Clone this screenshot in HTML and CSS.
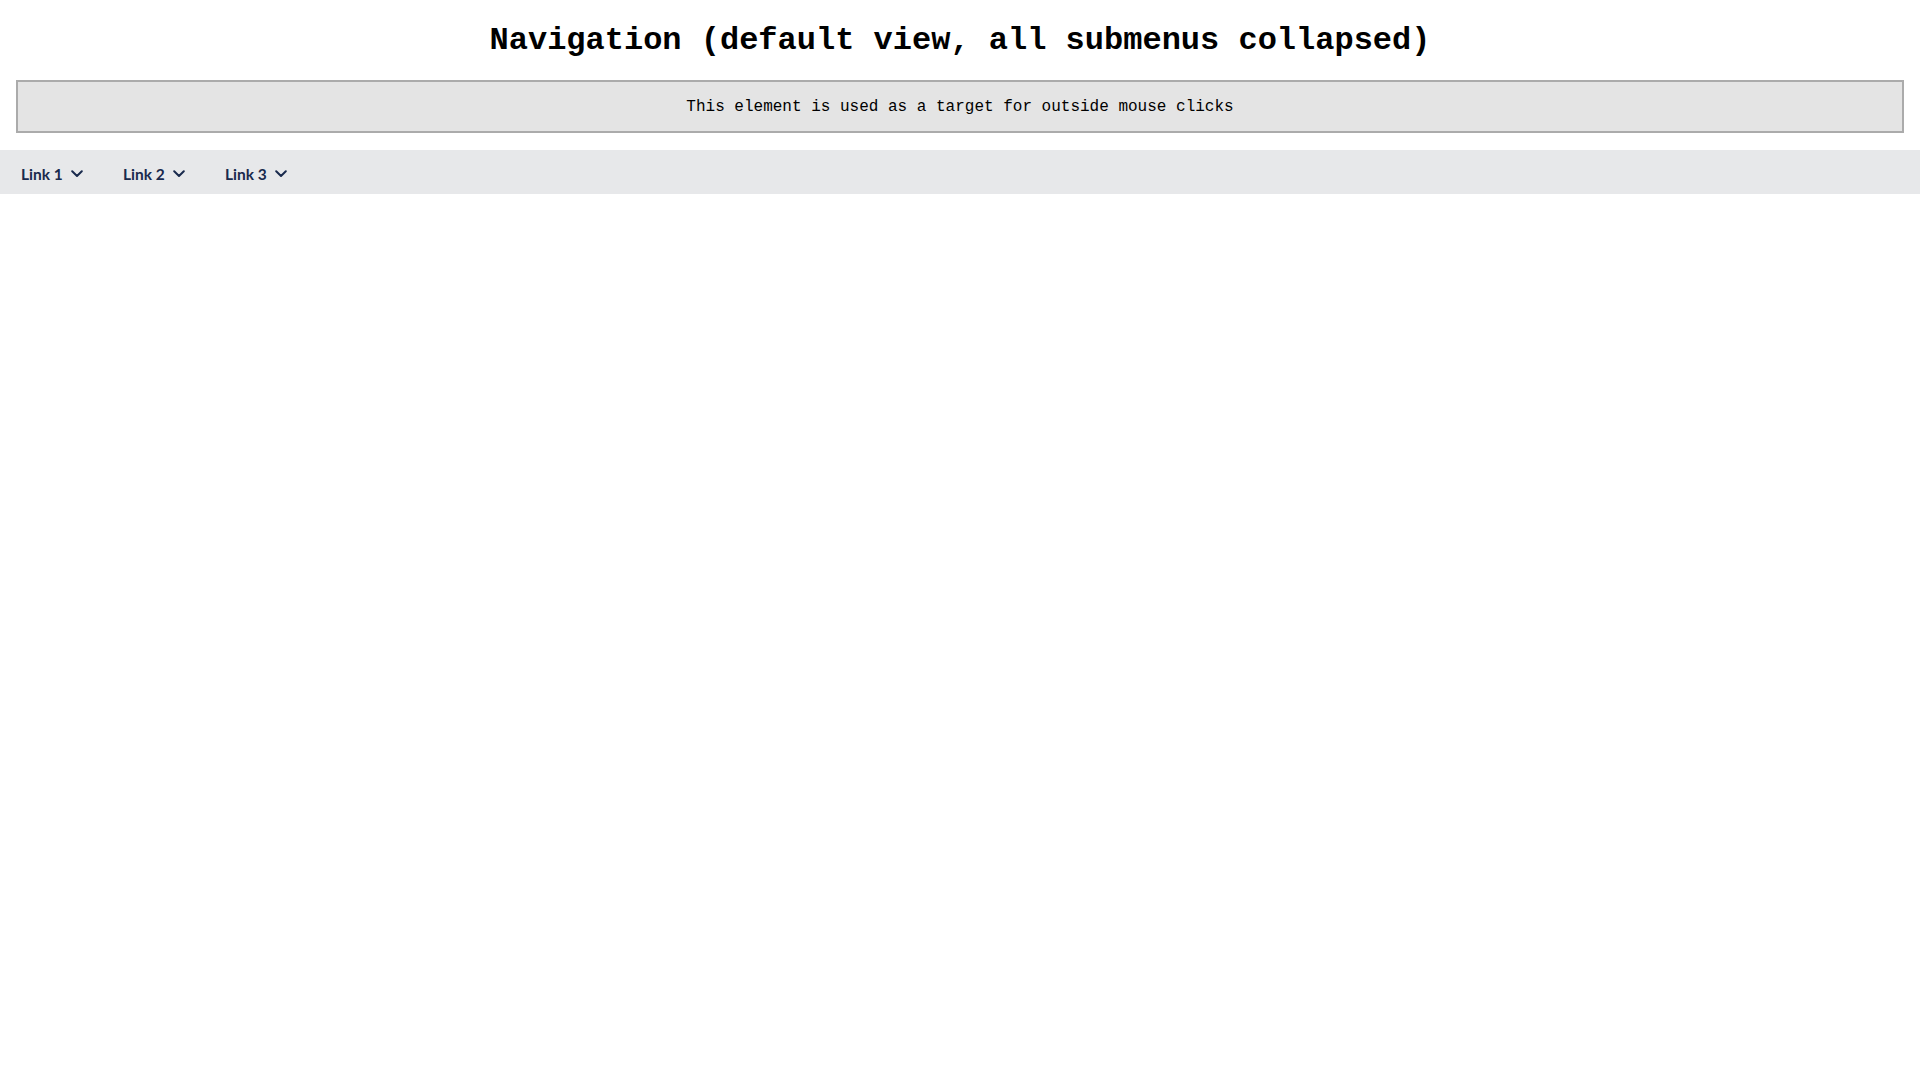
FILE: index.html
```html
<!DOCTYPE html>
<html>
<head>
<meta charset="utf-8">
<title>Navigation</title>
<link rel="stylesheet" href="styles.css">
</head>
<body>
<h1 class="title">Navigation (default view, all submenus collapsed)</h1>
<div class="click-target">This element is used as a target for outside mouse clicks</div>
<nav class="nav">
  <ul class="nav-list">
    <li class="nav-item"><a class="nav-link" href="#">Link 1<svg class="chev" viewBox="0 0 12 8" width="12" height="8"><path d="M1.2 1.3 L6 6 L10.8 1.3" fill="none" stroke="currentColor" stroke-width="2" stroke-linecap="round" stroke-linejoin="round"/></svg></a></li>
    <li class="nav-item"><a class="nav-link" href="#">Link 2<svg class="chev" viewBox="0 0 12 8" width="12" height="8"><path d="M1.2 1.3 L6 6 L10.8 1.3" fill="none" stroke="currentColor" stroke-width="2" stroke-linecap="round" stroke-linejoin="round"/></svg></a></li>
    <li class="nav-item"><a class="nav-link" href="#">Link 3<svg class="chev" viewBox="0 0 12 8" width="12" height="8"><path d="M1.2 1.3 L6 6 L10.8 1.3" fill="none" stroke="currentColor" stroke-width="2" stroke-linecap="round" stroke-linejoin="round"/></svg></a></li>
  </ul>
</nav>
</body>
</html>
```

FILE: styles.css
```css
html, body {
  margin: 0;
  padding: 0;
  background: #ffffff;
}

body {
  font-family: "Liberation Mono", "Courier New", monospace;
  color: #000;
}

.title {
  font-family: "Liberation Mono", "Courier New", monospace;
  font-weight: bold;
  font-size: 32px;
  line-height: 36px;
  text-align: center;
  margin: 23px 0 21px;
}

.click-target {
  margin: 0 16px;
  border: 2px solid #ababab;
  background: #e4e4e4;
  font-size: 16px;
  line-height: 18px;
  padding: 16px 0 15px;
  text-align: center;
}

.nav {
  margin-top: 17px;
  background: #e7e8ea;
  height: 44px;
}

.nav-list {
  list-style: none;
  margin: 0;
  padding: 0 0 0 21px;
  display: flex;
  height: 100%;
}

.nav-item {
  width: 102px;
  display: flex;
  align-items: center;
}

.nav-link {
  display: flex;
  align-items: center;
  font-family: Lato, "Open Sans", sans-serif;
  font-weight: bold;
  font-size: 15.5px;
  color: #192a4d;
  text-decoration: none;
  padding-top: 3px;
}

.chev {
  margin-left: 8px;
  display: block;
}
```
